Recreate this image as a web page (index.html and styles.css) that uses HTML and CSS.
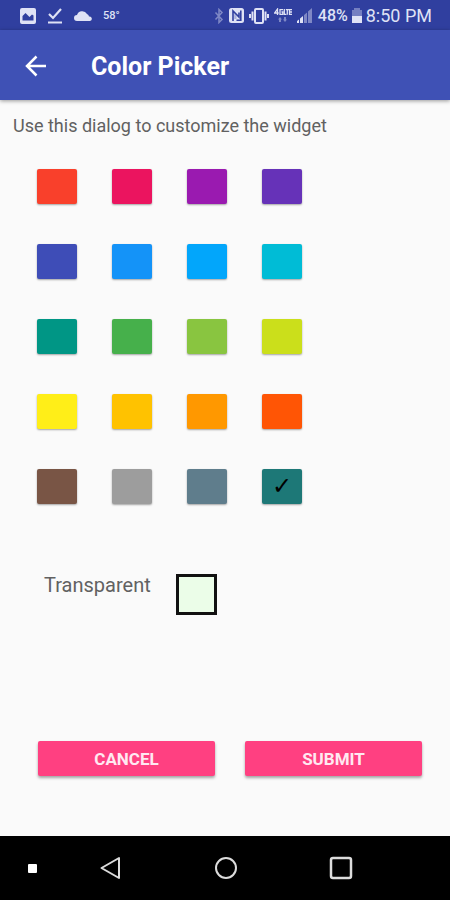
FILE: index.html
```html
<!DOCTYPE html>
<html lang="en">
<head>
<meta charset="utf-8">
<meta name="viewport" content="width=device-width, initial-scale=1">
<title>Color Picker</title>
<link rel="stylesheet" href="styles.css">
</head>
<body>
<div class="status">
  <div class="status-left">
    <svg width="16" height="16" viewBox="0 0 16 16"><path fill="currentColor" fill-rule="evenodd" d="M2 0h12a2 2 0 0 1 2 2v12a2 2 0 0 1-2 2H2a2 2 0 0 1-2-2V2a2 2 0 0 1 2-2zM2.500 12.500h11V7.500l-1.500-1-2.500 2.500-4-4-3 3z"/></svg>
    <svg width="16" height="16" viewBox="0 0 16 16"><path fill="none" stroke="currentColor" stroke-width="2.200" d="M2 6l4 4 8-9M1 14.500h14"/></svg>
    <svg width="18" height="16" viewBox="0 0 18 16"><path fill="currentColor" d="M3 13a3 3 0 0 1 0-6 5.500 5.500 0 0 1 10-1 3 3 0 0 1 2 2.500A2.300 2.300 0 0 1 16 13z"/></svg>
    <span class="temp">58°</span>
  </div>
  <div class="status-right">
    <svg class="dim" width="10" height="16" viewBox="0 0 10 16"><path fill="none" stroke="currentColor" stroke-width="1.500" d="M1.500 4.500l6.500 7L5 14.500v-13L8 4.500l-6.500 7"/></svg>
    <svg width="15" height="15" viewBox="0 0 15 15"><rect width="15" height="15" rx="2.500" fill="currentColor"/><path fill="none" stroke="#303f9f" stroke-width="1.600" d="M4 13V3l6 6V4.500M11.800 2.500v9.700H7.500"/><path fill="#303f9f" d="M5.200 5.500L7.500 8v3H5.200z" opacity=".3"/></svg>
    <svg width="20" height="16" viewBox="0 0 20 16"><rect x="6" y="1" width="8" height="14" rx="1" fill="none" stroke="currentColor" stroke-width="2"/><path fill="none" stroke="currentColor" stroke-width="2" d="M3.500 3.500v9M16.500 3.500v9M1 6v4M19 6v4"/></svg>
    <svg width="18" height="16" viewBox="0 0 18 16"><path fill="none" stroke="currentColor" stroke-width="1.300" d="M3.500 7V1L.7 5h4M9 1.700H6v4.600h2.800V4H7.500M10.300 1v5.300h2M11.800 1.700h3M13.300 1.700v5M18 1.700h-2.500v4.600H18M15.500 4H18"/><path class="dim" fill="currentColor" d="M6 9l2 2.500H7V14H5v-2.500H4zM11 14l-2-2.500h1V9h2v2.500h1z"/></svg>
    <svg width="16" height="16" viewBox="0 0 16 16"><path fill="currentColor" d="M0 15v-2l2-1.500V15zM3 15v-4.500L6 8v7z"/><path class="dim" fill="currentColor" d="M7 15V7l3-2.500V15zM11 15V3.500L15 0v15z"/></svg>
    <span class="charge">48%</span>
    <svg class="battery" width="12" height="16" viewBox="0 0 12 16"><path fill="currentColor" opacity=".4" d="M3 0h6v2h2v6H1V2h2z"/><path fill="currentColor" d="M1 8h10v7H1z"/></svg>
    <time class="clock">8:50 PM</time>
  </div>
</div>
<header class="appbar">
  <button class="up" type="button" aria-label="Back">
    <svg width="22" height="22" viewBox="0 0 22 22"><path fill="none" stroke="currentColor" stroke-width="2.500" d="M21 11H2.500M11.500 1.500L2 11l9.500 9.500"/></svg>
  </button>
  <h1 class="title">Color Picker</h1>
</header>
<main class="content">
  <p class="hint">Use this dialog to customize the widget</p>
  <div class="palette">
    <button class="swatch red" type="button" aria-label="Red"></button>
    <button class="swatch pink" type="button" aria-label="Pink"></button>
    <button class="swatch purple" type="button" aria-label="Purple"></button>
    <button class="swatch violet" type="button" aria-label="Deep purple"></button>
    <button class="swatch indigo" type="button" aria-label="Indigo"></button>
    <button class="swatch blue" type="button" aria-label="Blue"></button>
    <button class="swatch sky" type="button" aria-label="Light blue"></button>
    <button class="swatch cyan" type="button" aria-label="Cyan"></button>
    <button class="swatch teal" type="button" aria-label="Teal"></button>
    <button class="swatch green" type="button" aria-label="Green"></button>
    <button class="swatch light-green" type="button" aria-label="Light green"></button>
    <button class="swatch lime" type="button" aria-label="Lime"></button>
    <button class="swatch yellow" type="button" aria-label="Yellow"></button>
    <button class="swatch amber" type="button" aria-label="Amber"></button>
    <button class="swatch orange" type="button" aria-label="Orange"></button>
    <button class="swatch deep-orange" type="button" aria-label="Deep orange"></button>
    <button class="swatch brown" type="button" aria-label="Brown"></button>
    <button class="swatch grey" type="button" aria-label="Grey"></button>
    <button class="swatch blue-grey" type="button" aria-label="Blue grey"></button>
    <button class="swatch dark-teal" type="button" aria-label="Dark teal" aria-pressed="true">✓</button>
  </div>
  <div class="transparent">
    <label class="transparent-label" for="transparent">Transparent</label>
    <input class="transparent-box" id="transparent" type="checkbox">
  </div>
  <div class="actions">
    <button class="action" type="button">CANCEL</button>
    <button class="action" type="button">SUBMIT</button>
  </div>
</main>
<nav class="navbar">
  <button class="nav-button nav-dot" type="button" aria-label="Hide navigation bar"><svg width="9" height="9" viewBox="0 0 9 9"><rect width="9" height="9" rx="1" fill="#fff"/></svg></button>
  <button class="nav-button" type="button" aria-label="Back"><svg width="24" height="24" viewBox="0 0 24 24"><path fill="none" stroke="currentColor" stroke-width="2" stroke-linejoin="round" d="M20 2v20L2.500 12z"/></svg></button>
  <button class="nav-button" type="button" aria-label="Home"><svg width="24" height="24" viewBox="0 0 24 24"><circle cx="12" cy="12" r="10" fill="none" stroke="currentColor" stroke-width="2"/></svg></button>
  <button class="nav-button" type="button" aria-label="Recent apps"><svg width="24" height="24" viewBox="0 0 24 24"><rect x="2" y="2" width="20" height="20" rx="2" fill="none" stroke="currentColor" stroke-width="2.500"/></svg></button>
</nav>
</body>
</html>
```
FILE: styles.css
```css
* {
  box-sizing: border-box;
}

body {
  margin: 0;
  min-height: 100vh;
  display: flex;
  flex-direction: column;
  background: #fafafa;
  color: #616161;
  font-family: Roboto, "Liberation Sans", sans-serif;
}

button {
  border: 0;
  padding: 0;
  font-family: inherit;
  cursor: pointer;
}

svg {
  display: block;
  flex: none;
}

.status {
  display: flex;
  justify-content: space-between;
  align-items: center;
  height: 30px;
  padding: 1px 18px 0 20px;
  background: #303f9f;
  color: #dfe2f5;
}

.status-left {
  display: flex;
  align-items: center;
  gap: 11px;
}

.status-right {
  display: flex;
  align-items: center;
  gap: 5px;
  font-size: 18px;
  line-height: 30px;
}

.dim {
  opacity: 0.45;
}

.temp {
  font-size: 11px;
  font-weight: 500;
}

.charge {
  font-size: 16px;
  font-weight: 500;
}

.battery {
  margin: 0 -2px;
}

.appbar {
  display: flex;
  align-items: center;
  gap: 44px;
  height: 70px;
  padding: 2px 25px 0;
  background: #3f51b5;
  color: #fff;
  box-shadow: 0 1px 4px rgba(0, 0, 0, 0.4);
}

.up {
  background: none;
  color: inherit;
}

.title {
  margin: 0;
  padding-top: 2px;
  font-size: 25px;
  line-height: 32px;
  font-weight: 700;
}

.content {
  flex: 1;
  display: flex;
  flex-direction: column;
}

.hint {
  margin: 14px 13px 0;
  font-size: 18px;
  line-height: 24px;
}

.palette {
  display: grid;
  grid-template-columns: repeat(4, 40px);
  grid-auto-rows: 35px;
  gap: 40px 35px;
  padding: 31px 37px 0;
}

.swatch {
  border-radius: 2px;
  box-shadow: 0 1px 2px rgba(0, 0, 0, 0.35);
  color: #000;
  font-family: "DejaVu Sans", sans-serif;
  font-size: 24px;
  line-height: 35px;
}

.red { background: #f9402b; }
.pink { background: #eb145f; }
.purple { background: #9a1ab0; }
.violet { background: #6632b8; }
.indigo { background: #3e4db7; }
.blue { background: #1493f8; }
.sky { background: #02a6fb; }
.cyan { background: #00bcd6; }
.teal { background: #009685; }
.green { background: #46b04b; }
.light-green { background: #89c540; }
.lime { background: #cbdf1b; }
.yellow { background: #ffee18; }
.amber { background: #ffc200; }
.orange { background: #ff9800; }
.deep-orange { background: #ff5505; }
.brown { background: #795545; }
.grey { background: #9d9d9d; }
.blue-grey { background: #5f7d8c; }
.dark-teal { background: #1d7877; }

.transparent {
  display: flex;
  align-items: flex-start;
  gap: 25px;
  padding: 70px 44px 0;
}

.transparent-label {
  font-size: 20px;
  line-height: 22px;
}

.transparent-box {
  appearance: none;
  width: 41px;
  height: 41px;
  margin: 0;
  border: 3px solid #111;
  background: #ebfde8;
}

.actions {
  display: grid;
  grid-template-columns: 1fr 1fr;
  gap: 30px;
  margin-top: auto;
  padding: 0 28px 60px 38px;
}

.action {
  height: 35px;
  border-radius: 2px;
  background: #ff4081;
  box-shadow: 0 2px 3px rgba(0, 0, 0, 0.35);
  color: #ffe9f1;
  font-size: 17px;
  font-weight: 700;
}

.navbar {
  display: grid;
  grid-template-columns: 53fr 115fr 115fr 115fr 52fr;
  height: 64px;
  background: #000;
  color: #dcdcdc;
}

.nav-button {
  display: flex;
  align-items: center;
  justify-content: center;
  background: none;
  color: inherit;
}

.nav-dot {
  padding-left: 12px;
}
```
